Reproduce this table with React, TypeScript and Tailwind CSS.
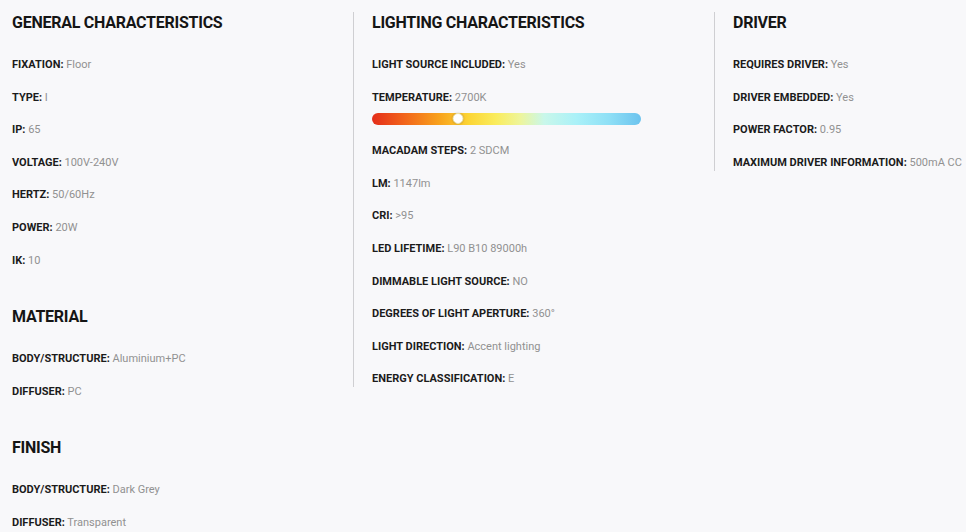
type Spec = { label: string; value: string; bar?: number }

const general: Spec[] = [
  { label: "FIXATION", value: "Floor" },
  { label: "TYPE", value: "I" },
  { label: "IP", value: "65" },
  { label: "VOLTAGE", value: "100V-240V" },
  { label: "HERTZ", value: "50/60Hz" },
  { label: "POWER", value: "20W" },
  { label: "IK", value: "10" },
]

const material: Spec[] = [
  { label: "BODY/STRUCTURE", value: "Aluminium+PC" },
  { label: "DIFFUSER", value: "PC" },
]

const finish: Spec[] = [
  { label: "BODY/STRUCTURE", value: "Dark Grey" },
  { label: "DIFFUSER", value: "Transparent" },
]

const lighting: Spec[] = [
  { label: "LIGHT SOURCE INCLUDED", value: "Yes" },
  { label: "TEMPERATURE", value: "2700K", bar: 32 },
  { label: "MACADAM STEPS", value: "2 SDCM" },
  { label: "LM", value: "1147lm" },
  { label: "CRI", value: ">95" },
  { label: "LED LIFETIME", value: "L90 B10 89000h" },
  { label: "DIMMABLE LIGHT SOURCE", value: "NO" },
  { label: "DEGREES OF LIGHT APERTURE", value: "360°" },
  { label: "LIGHT DIRECTION", value: "Accent lighting" },
  { label: "ENERGY CLASSIFICATION", value: "E" },
]

const driver: Spec[] = [
  { label: "REQUIRES DRIVER", value: "Yes" },
  { label: "DRIVER EMBEDDED", value: "Yes" },
  { label: "POWER FACTOR", value: "0.95" },
  { label: "MAXIMUM DRIVER INFORMATION", value: "500mA CC" },
]

function TempBar({ pos }: { pos: number }) {
  return (
    <div className="relative mt-[7px] mb-[2px] h-3 w-[269px] rounded-full bg-[linear-gradient(90deg,#e42d1a_0%,#f2641a_12%,#f8a21c_25%,#fcd535_36%,#faec5c_46%,#eef59a_55%,#c9f7ea_64%,#aaf1f8_76%,#8fe0f6_88%,#6cc3ee_100%)]">
      {/* knob */}
      <div
        className="absolute top-[0.5px] h-[11px] w-[11px] -translate-x-1/2 rounded-full border border-[#f0e3a8] bg-white shadow-[0_0_2px_rgba(0,0,0,0.25)]"
        style={{ left: `${pos}%` }}
      />
    </div>
  )
}

function Row({ spec }: { spec: Spec }) {
  return (
    <div>
      <p className="whitespace-nowrap text-[11px] leading-4">
        <span className="font-bold text-[#1b1b1b]">{spec.label}:</span>{" "}
        <span className="text-[#919191]">{spec.value}</span>
      </p>
      {spec.bar !== undefined && <TempBar pos={spec.bar} />}
    </div>
  )
}

function Section({ title, items, first }: { title: string; items: Spec[]; first?: boolean }) {
  return (
    <section className={first ? "" : "mt-[37.5px]"}>
      <h2 className="mb-[24px] text-[16px] font-bold leading-[21px] tracking-[-0.25px] text-[#151515]">{title}</h2>
      <div className="flex flex-col gap-y-[16.6px]">
        {items.map((s, i) => (
          <Row key={i} spec={s} />
        ))}
      </div>
    </section>
  )
}

export default function App() {
  return (
    <div className="h-[532px] w-[966px] overflow-hidden bg-[#f8f8fa] pl-3 pt-3 font-['Roboto',_'Liberation_Sans',_sans-serif]">
      <div className="flex items-start">
        <div className="w-[341px]">
          <Section title="GENERAL CHARACTERISTICS" items={general} first />
          <Section title="MATERIAL" items={material} />
          <Section title="FINISH" items={finish} />
        </div>
        <div className="w-[361px] border-l border-[#cfcfd2] pl-[18px]">
          <Section title="LIGHTING CHARACTERISTICS" items={lighting} first />
        </div>
        <div className="flex-1 border-l border-[#cfcfd2] pl-[18px]">
          <Section title="DRIVER" items={driver} first />
        </div>
      </div>
    </div>
  )
}
